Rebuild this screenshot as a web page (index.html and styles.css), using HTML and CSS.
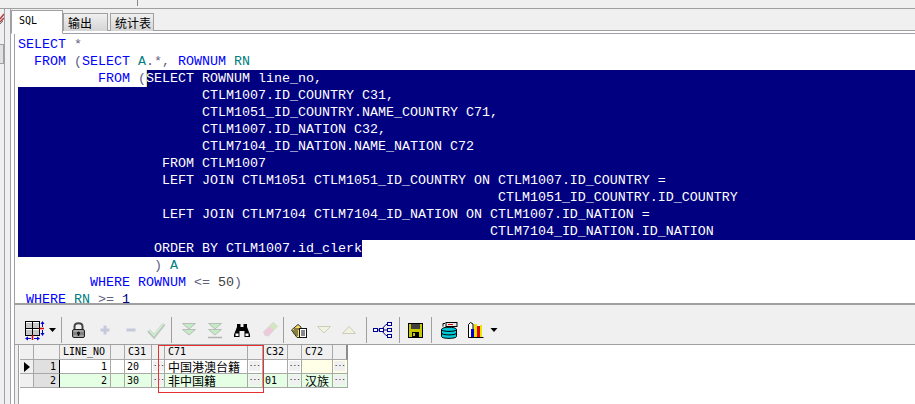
FILE: index.html
```html
<!DOCTYPE html>
<html lang="zh">
<head>
<meta charset="utf-8">
<title>SQL</title>
<link rel="stylesheet" href="styles.css">
</head>
<body>
<div class="app">
  <div class="topstrip"><div class="topstrip-seg"></div></div>
  <div class="workspace">
    <aside class="rail">
      <div class="rail-inner">
        <svg class="rail-icon" width="4" height="13" viewBox="0 0 4 13"><path d="M0 7 L4 2 M0 10 L4 6" stroke="#b04040" stroke-width="1.5"/><path d="M0 12 L3 9" stroke="#707070"/></svg>
        <div class="rail-button"></div>
      </div>
    </aside>
    <main class="pane">
      <div class="tabs">
        <div class="tab tab-active">SQL</div>
        <div class="tab">输出</div>
        <div class="tab tab-last">统计表</div>
      </div>
      <div class="pane-body">
        <div class="editor">
          <div class="line"><span class="k">SELECT</span> <span class="o">*</span></div>
          <div class="line">  <span class="k">FROM</span> <span class="o">(</span><span class="k">SELECT</span> <span class="t">A</span><span class="o">.*,</span> <span class="k">ROWNUM</span> <span class="t">RN</span></div>
          <div class="line line-start"><span>          <span class="k">FROM</span> <span class="o">(</span></span><span class="sel-fill"><span class="caret"></span>SELECT ROWNUM line_no,</span></div>
          <div class="line sel">                       CTLM1007.ID_COUNTRY C31,</div>
          <div class="line sel">                       CTLM1051_ID_COUNTRY.NAME_COUNTRY C71,</div>
          <div class="line sel">                       CTLM1007.ID_NATION C32,</div>
          <div class="line sel">                       CTLM7104_ID_NATION.NAME_NATION C72</div>
          <div class="line sel">                  FROM CTLM1007</div>
          <div class="line sel">                  LEFT JOIN CTLM1051 CTLM1051_ID_COUNTRY ON CTLM1007.ID_COUNTRY =</div>
          <div class="line sel">                                                            CTLM1051_ID_COUNTRY.ID_COUNTRY</div>
          <div class="line sel">                  LEFT JOIN CTLM7104 CTLM7104_ID_NATION ON CTLM1007.ID_NATION =</div>
          <div class="line sel">                                                           CTLM7104_ID_NATION.ID_NATION</div>
          <div class="line"><span class="sel-part">                 ORDER BY CTLM1007.id_clerk</span></div>
          <div class="line">                 <span class="o">)</span> <span class="t">A</span></div>
          <div class="line">         <span class="k">WHERE</span> <span class="k">ROWNUM</span> <span class="o">&lt;=</span> <span class="n">50</span><span class="o">)</span></div>
          <div class="line"> <span class="k">WHERE</span> <span class="t">RN</span> <span class="o">&gt;=</span> <span class="b">1</span></div>
        </div>
        <div class="lower">
          <div class="toolbar">
            <div class="slot s22"><svg width="22" height="26" viewBox="0 0 22 26"><rect x="1.5" y="4.5" width="14" height="14" fill="#c8c8c8" stroke="#000"/><path d="M8.5 4.5V18.5M1.5 11.500H15.500" stroke="#000"/><path d="M2 5H8V6H2ZM9 5H15V6H9ZM2 12H8V13H2ZM9 12H15V13H9Z" fill="#fff"/><path d="M8.5 18V23" stroke="#e00000" stroke-width="1.5"/><path d="M15.5 11.5H20" stroke="#e00000" stroke-width="1.5"/><path d="M18.5 5V10M18.5 13V18" stroke="#0000d0"/><path d="M16.5 7L18.5 4L20.5 7ZM16.5 16L18.5 19L20.5 16Z" fill="#0000d0"/><path d="M2 21.5H7M10 21.5H15" stroke="#0000d0"/><path d="M4 19.5L1 21.5L4 23.5ZM13 19.5L16 21.5L13 23.5Z" fill="#0000d0"/></svg></div>
            <div class="slot s12"><svg width="12" height="26" viewBox="0 0 12 26"><path d="M3 11H10L6.500 15Z" fill="#000"/></svg></div>
            <div class="slot s6"><div class="sep"></div></div>
            <div class="slot s28"><svg width="28" height="26" viewBox="0 0 28 26"><path d="M10.500 12V9.500C10.500 5 18.500 5 18.500 9.500V12" fill="none" stroke="#444" stroke-width="2"/><rect x="8.500" y="12.500" width="12" height="8" rx="1.500" fill="#808080" stroke="#222"/><path d="M9.500 14H19.500M9.500 19H19.500" stroke="#c8c8c8"/><circle cx="14.500" cy="16" r="1.500" fill="#111"/><path d="M14.500 16V19" stroke="#111" stroke-width="1.500"/></svg></div>
            <div class="slot s26"><svg width="26" height="26" viewBox="0 0 26 26"><path d="M13 8.500V17.500M8.500 13H17.500" stroke="#c6c8dc" stroke-width="3"/></svg></div>
            <div class="slot s26"><svg width="26" height="26" viewBox="0 0 26 26"><path d="M8.500 13H17.500" stroke="#c6c8dc" stroke-width="3"/></svg></div>
            <div class="slot s24"><svg width="24" height="26" viewBox="0 0 24 26"><path d="M4.500 13.500L10 19.500L20 7" fill="none" stroke="#b8c8b8" stroke-width="3.500"/><path d="M5 13L10 18.500L19.500 6.500" fill="none" stroke="#d4ecd4" stroke-width="1.500"/></svg></div>
            <div class="slot s6"><div class="sep"></div></div>
            <div class="slot s30"><svg width="30" height="26" viewBox="0 0 30 26"><path d="M8.500 6.500H21.500L15 12ZM8.500 12.500H21.500L15 18Z" fill="#c4ecc4" stroke="#b8beb8"/></svg></div>
            <div class="slot s22"><svg width="22" height="26" viewBox="0 0 22 26"><path d="M4.500 6.500H17.500L11 12ZM4.500 12.500H17.500L11 18Z" fill="#c4ecc4" stroke="#b8beb8"/><path d="M4 20.500H18" stroke="#b0b4b0" stroke-width="1.500"/></svg></div>
            <div class="slot s32"><svg width="32" height="26" viewBox="0 0 32 26"><path d="M11 7H14.500V10H17.500V7H21V10L24 17.500V20H18.500V14H13.500V20H8V17.500L11 10Z" fill="#000"/><rect x="9.500" y="16.500" width="3" height="2.500" fill="#fff"/><rect x="19.500" y="16.500" width="3" height="2.500" fill="#fff"/></svg></div>
            <div class="slot s24"><svg width="24" height="26" viewBox="0 0 24 26"><path d="M5.500 15L15 5.500L19.500 9L10.500 19L7 18.500Z" fill="#f0c8dc" stroke="#d8d8d8"/><path d="M11 9.500L15 5.500L19.500 9L15.500 13Z" fill="#d0e8c0"/></svg></div>
            <div class="slot s2"><div class="sep"></div></div>
            <div class="slot s30"><svg width="30" height="26" viewBox="0 0 30 26"><path d="M7.500 13L14 7.500L17 10V20.500H13Z" fill="#f8e060" stroke="#333"/><path d="M8.500 14H14M9.500 16H14M11 18H14M10 12H15" stroke="#222"/><rect x="15.500" y="11.500" width="7" height="9" fill="#fff" stroke="#111"/><path d="M17 14H21M17 16H21M17 18H21" stroke="#111"/></svg></div>
            <div class="slot s20"><svg width="20" height="26" viewBox="0 0 20 26"><path d="M3.500 9.500H16.500L10 16Z" fill="#f2f2e0" stroke="#ccccb8"/></svg></div>
            <div class="slot s30"><svg width="30" height="26" viewBox="0 0 30 26"><path d="M8.500 16.500H21.500L15 9.500Z" fill="#f2f2e0" stroke="#ccccb8"/></svg></div>
            <div class="slot s4"><div class="sep"></div></div>
            <div class="slot s30"><svg width="30" height="26" viewBox="0 0 30 26"><path d="M8 13H13M13 13L18 7.500H21M13 13H21M13 13L18 18.500H21" fill="none" stroke="#000090"/><rect x="5.500" y="11.500" width="4" height="3" fill="#fff" stroke="#000090"/><rect x="11.500" y="11.500" width="4" height="3" fill="#fff" stroke="#000090"/><rect x="19.500" y="5.500" width="4" height="3" fill="#fff" stroke="#000090"/><rect x="19.500" y="11.500" width="4" height="3" fill="#fff" stroke="#000090"/><rect x="19.500" y="17.500" width="4" height="3" fill="#fff" stroke="#000090"/></svg></div>
            <div class="slot s2"><div class="sep"></div></div>
            <div class="slot s30"><svg width="30" height="26" viewBox="0 0 30 26"><rect x="8.500" y="6.500" width="14" height="14" fill="#c8c800" stroke="#000"/><rect x="11" y="7" width="9" height="5" fill="#404040"/><rect x="12" y="15" width="7" height="5" fill="#000"/><rect x="13" y="16" width="2" height="3" fill="#c8c800"/></svg></div>
            <div class="slot s2"><div class="sep"></div></div>
            <div class="slot s34"><svg width="34" height="26" viewBox="0 0 34 26"><rect x="14" y="5.500" width="11" height="4" fill="#e8e8e8" stroke="#000"/><rect x="16" y="7" width="5" height="1" fill="#e00000"/><path d="M11 9.500V6.500H13" fill="none" stroke="#000"/><path d="M9.500 12.500C9.500 9.500 24.500 9.500 24.500 12.500V19.500C24.500 22 9.500 22 9.500 19.500Z" fill="#00c8d8" stroke="#000"/><path d="M9.500 12.500C9.500 15 24.500 15 24.500 12.500M9.500 16C9.500 18.500 24.500 18.500 24.500 16" fill="none" stroke="#000"/></svg></div>
            <div class="slot s20"><svg width="20" height="26" viewBox="0 0 20 26"><path d="M2.500 7.500L4.500 5.500L7 7V20.500H2.500Z" fill="#fff" stroke="#000"/><rect x="5" y="12" width="3" height="8" fill="#0000d0"/><rect x="8" y="7" width="3" height="13" fill="#f0e000"/><rect x="11" y="9" width="3" height="11" fill="#e00000"/><rect x="14" y="8" width="2" height="12" fill="#e8e800"/><path d="M2.500 20.500H17.500" stroke="#000"/></svg></div>
            <div class="slot s16"><svg width="16" height="26" viewBox="0 0 16 26"><path d="M4.500 11H11.500L8 15Z" fill="#000"/></svg></div>
          </div>
          <div class="results">
            <div class="datagrid">
              <div class="cell head"></div>
              <div class="cell head"></div>
              <div class="cell head">LINE_NO</div>
              <div class="cell head"></div>
              <div class="cell head">C31</div>
              <div class="cell head"></div>
              <div class="cell head">C71</div>
              <div class="cell head"></div>
              <div class="cell head">C32</div>
              <div class="cell head"></div>
              <div class="cell head">C72</div>
              <div class="cell head head-last"></div>

              <div class="cell ind"><span class="arrow"></span></div>
              <div class="cell num">1</div>
              <div class="cell val right">1</div>
              <div class="cell val more-cell"></div>
              <div class="cell val">20</div>
              <div class="cell val more-cell"><span class="more">...</span></div>
              <div class="cell val cjk">中国港澳台籍</div>
              <div class="cell val more-cell"><span class="more">...</span></div>
              <div class="cell val"></div>
              <div class="cell val more-cell"><span class="more">...</span></div>
              <div class="cell val yellow"></div>
              <div class="cell val yellow more-cell"><span class="more">...</span></div>

              <div class="cell ind"></div>
              <div class="cell num">2</div>
              <div class="cell val green right">2</div>
              <div class="cell val green more-cell"></div>
              <div class="cell val green">30</div>
              <div class="cell val green more-cell"><span class="more">...</span></div>
              <div class="cell val green cjk">非中国籍</div>
              <div class="cell val green more-cell"><span class="more">...</span></div>
              <div class="cell val green">01</div>
              <div class="cell val green more-cell"><span class="more">...</span></div>
              <div class="cell val green cjk">汉族</div>
              <div class="cell val green more-cell"><span class="more">...</span></div>
            </div>
            <div class="annotation"></div>
          </div>
        </div>
      </div>
    </main>
  </div>
</div>
</body>
</html>
```

FILE: styles.css
```css
* { box-sizing: border-box; }
html, body { margin: 0; height: 100%; overflow: hidden; background: #f0f0f0; }
.app { width: 915px; height: 404px; display: flex; flex-direction: column; overflow: hidden; }

.topstrip { height: 9px; flex: none; background: #f0f0f0; border-bottom: 1px solid #a0a0a0; }
.topstrip-seg { width: 138px; height: 6px; border-right: 1px solid #8a8a8a; }

.workspace { flex: 1; display: flex; min-height: 0; }

.rail { width: 11px; flex: none; border-right: 1px solid #a0a0a8; background: #f0f0f0; }
.rail-inner { width: 5px; height: 100%; border-right: 1px solid #a0a0a8; display: flex; flex-direction: column; }
.rail-icon { display: block; margin-top: 3px; }
.rail-button { width: 4px; height: 20px; margin-top: 19px; background: #e0e0e0; border: 1px solid #a0a0a0; border-left: none; }

.pane { flex: 1; min-width: 0; display: flex; flex-direction: column; background: #fff; }

.tabs { height: 25px; flex: none; display: flex; align-items: flex-end; background: linear-gradient(#f0f0f0 0 21px, #a0a0a0 21px 22px, #fff 22px 24px, #a0a0a8 24px); }
.tab { height: 18px; margin-bottom: 3px; padding: 0 0 0 4px; display: flex; align-items: center; width: 45px; flex: none; white-space: nowrap; font: 12px "Noto Sans CJK SC", sans-serif; color: #000; background: linear-gradient(#f0f0f0, #d4d4d4); border: 1px solid #a0a0a0; border-bottom: none; }
.tab-last { margin-left: 2px; width: 44px; }
.tab-active { width: 52px; height: 24px; margin-bottom: 0; background: #fff; font: 12px "DejaVu Sans Mono", monospace; font-size: 10px; align-items: flex-start; padding: 4px 0 0 7px; z-index: 1; border-bottom: 1px solid #fff; }

.pane-body { flex: 1; min-height: 0; display: flex; flex-direction: column; margin-left: 3px; border-left: 1px solid #a0a0a8; }

.editor { height: 269px; flex: none; overflow: hidden; background: #fff; padding: 2px 0 0 3px; font: 13.33px/17px "Liberation Mono", monospace; color: #000; }
.line { height: 17px; display: block; white-space: pre; }
.line-start { display: flex; }
.sel { background: #000080; color: #fff; }
.sel-fill { flex: 1; background: #000080; color: #fff; position: relative; }
.sel-part { background: #000080; color: #fff; display: inline-block; height: 17px; }
.caret { position: absolute; left: 0; top: 0; width: 1px; height: 17px; background: #f0e060; }
.k { color: #0000ff; }
.o { color: #606080; }
.t { color: #008080; }
.n { color: #404040; }
.b { color: #000080; }

.lower { flex: 1; min-height: 0; display: flex; flex-direction: column; background: #f0f0f0; border-top: 2px solid #a0a0a0; }

.toolbar { height: 40px; flex: none; display: flex; align-items: flex-start; padding: 12px 0 0 9px; border-bottom: 1px solid #a0a0a0; background: #f0f0f0; }
.slot { height: 26px; flex: none; display: flex; justify-content: center; }
.slot svg { display: block; }
.s2 { width: 2px; }
.s4 { width: 4px; }
.s6 { width: 6px; }
.s12 { width: 12px; }
.s16 { width: 16px; }
.s20 { width: 20px; }
.s22 { width: 22px; }
.s24 { width: 24px; }
.s26 { width: 26px; }
.s28 { width: 28px; }
.s30 { width: 30px; }
.s32 { width: 32px; }
.s34 { width: 34px; }
.sep { width: 1px; height: 26px; background: #a0a0a0; }

.results { flex: 1; min-height: 0; margin-left: 3px; background: #fff; border-left: 1px solid #a0a0a0; position: relative; }
.datagrid { display: grid; width: 328px; margin-left: 1px; grid-template-columns: 14px 26px 51px 14px 27px 13px 83px 15px 25px 14px 31px 15px; grid-template-rows: 15px 14px 14px; font: 10px/14px "DejaVu Sans Mono", monospace; color: #000; }
.cell { border-right: 1px solid #a8a8a8; border-bottom: 1px solid #a8a8a8; white-space: nowrap; padding-left: 2px; background: #fff; }
.head { background: #f0f0f0; padding-left: 3px; }
.head-last { border-right: 2px solid #8c8c8c; }
.ind { background: #f0f0f0; padding: 0; display: flex; align-items: center; justify-content: center; }
.arrow { width: 0; height: 0; border-left: 6px solid #000; border-top: 5px solid transparent; border-bottom: 5px solid transparent; }
.num { background: #e0e0e0; text-align: right; padding-right: 3px; border-right: 1px solid #000; }
.val { background: #fff; }
.right { text-align: right; padding-right: 3px; }
.green { background: #e4ffe4; }
.yellow { background: #ffffe8; }
.cjk { font: 12px/13px "Noto Sans CJK SC", sans-serif; padding-left: 3px; }
.more-cell { padding: 1px 0 0 1px; }
.more { display: block; width: 11px; height: 10px; background: #f0f0f0; text-align: center; font: 7px/7px "DejaVu Sans Mono", monospace; letter-spacing: -0.5px; }
.annotation { position: absolute; left: 139px; top: 0; width: 106px; height: 48px; border: 1px solid #e83030; pointer-events: none; }
```
